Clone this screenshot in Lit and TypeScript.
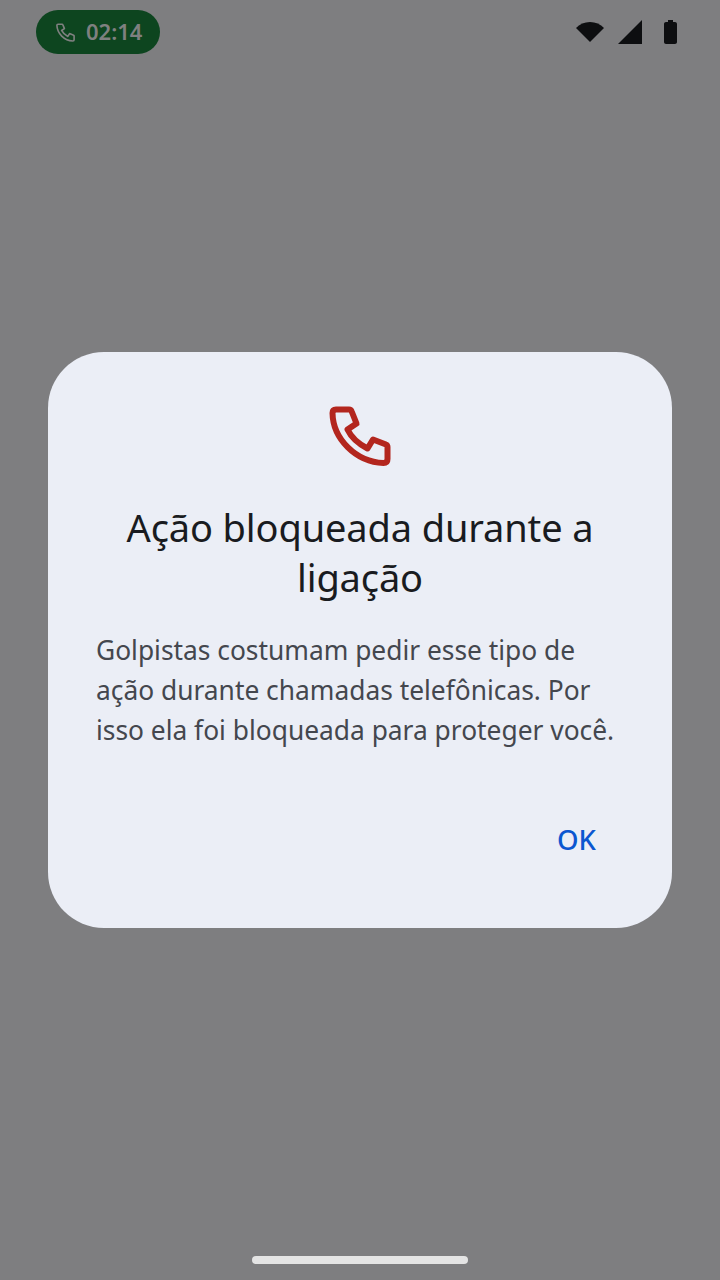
import { html, css, LitElement } from "lit";
import { customElement } from "lit/decorators.js";

@customElement("app-root")
export class AppRoot extends LitElement {
  static styles = css`
    :host {
      display: block;
      font-family: "Noto Sans", sans-serif;
    }
    .screen {
      width: 720px;
      height: 1280px;
      background: #7e7e80;
      display: grid;
      grid-template-rows: 1fr 576px 1fr;
      justify-items: center;
    }
    .top {
      width: 100%;
      box-sizing: border-box;
      padding: 10px 43px 0 36px;
      display: flex;
      justify-content: space-between;
      align-items: flex-start;
    }
    .call-pill {
      width: 124px;
      height: 44px;
      box-sizing: border-box;
      padding-left: 17px;
      border-radius: 22px;
      background: #0d451f;
      display: flex;
      align-items: center;
      gap: 8px;
      color: #7f8080;
      font-size: 22px;
      font-weight: 600;
      line-height: 42px;
    }
    .call-pill span {
      margin-bottom: 2px;
    }
    .status {
      display: flex;
      align-items: center;
      margin-top: 10px;
    }
    .wifi {
      margin-right: 14px;
    }
    .signal {
      margin-right: 22px;
    }
    .dialog {
      width: 624px;
      height: 576px;
      box-sizing: border-box;
      padding: 44px 48px 0;
      border-radius: 56px;
      background: #ebeef6;
      display: flex;
      flex-direction: column;
    }
    .icon {
      display: flex;
      justify-content: center;
    }
    h2 {
      margin: 26px 0 0;
      font-size: 38px;
      font-weight: 400;
      letter-spacing: -0.13px;
      line-height: 50px;
      text-align: center;
      color: #191b20;
    }
    p {
      margin: 28px 0 0;
      font-size: 26.35px;
      line-height: 40px;
      color: #44474e;
    }
    .actions {
      display: flex;
      justify-content: flex-end;
      margin-top: 70px;
      padding-right: 28px;
    }
    .ok {
      font-size: 27.5px;
      font-weight: 500;
      line-height: 40px;
      color: #0b57d0;
    }
    .bottom {
      width: 100%;
      display: flex;
      align-items: flex-end;
      justify-content: center;
    }
    .home {
      width: 216px;
      height: 8px;
      margin-bottom: 16px;
      border-radius: 4px;
      background: #e4e4e4;
    }
  `;

  phone(size: number, stroke: string, width: number) {
    return html`<svg width=${size} height=${size} viewBox="0 0 80 80" fill="none" stroke=${stroke} stroke-width=${width} stroke-linejoin="round">
      <path d="M16 13.500H29Q31 13.500 31.700 15.500L36.500 27.500L27.500 33.500Q33 45 47.500 52.500L53 43.500L66 48.500Q67.500 49 67.500 51V63Q67.500 67 63.500 67C36 66 13 43 12.500 17Q12.500 13.500 16 13.500Z" />
    </svg>`;
  }

  render() {
    return html`
      <div class="screen">
        <div class="top">
          <div class="call-pill">
            ${this.phone(25, "#7f8080", 5.2)}
            <span>02:14</span>
          </div>
          <div class="status">
            <svg class="wifi" width="28" height="20" viewBox="0 0 28 20"><path fill="#0d0e10" d="M0 6C3.500 2 8.500 0 14 0s10.500 2 14 6L14 20z" /></svg>
            <svg class="signal" width="24" height="24" viewBox="0 0 24 24"><path fill="#0d0e10" d="M0 24L24 0V24z" /></svg>
            <svg width="13" height="24" viewBox="0 0 13 24"><path fill="#0d0e10" d="M4 0h5v2h2c1.100 0 2 .9 2 2v18c0 1.100-.9 2-2 2H2c-1.100 0-2-.9-2-2V4c0-1.100.9-2 2-2h2z" /></svg>
          </div>
        </div>
        <div class="dialog">
          <div class="icon">${this.phone(80, "#b3261e", 6)}</div>
          <h2>Ação bloqueada durante a ligação</h2>
          <p>Golpistas costumam pedir esse tipo de ação durante chamadas telefônicas. Por isso ela foi bloqueada para proteger você.</p>
          <div class="actions"><span class="ok">OK</span></div>
        </div>
        <div class="bottom"><div class="home"></div></div>
      </div>
    `;
  }
}
